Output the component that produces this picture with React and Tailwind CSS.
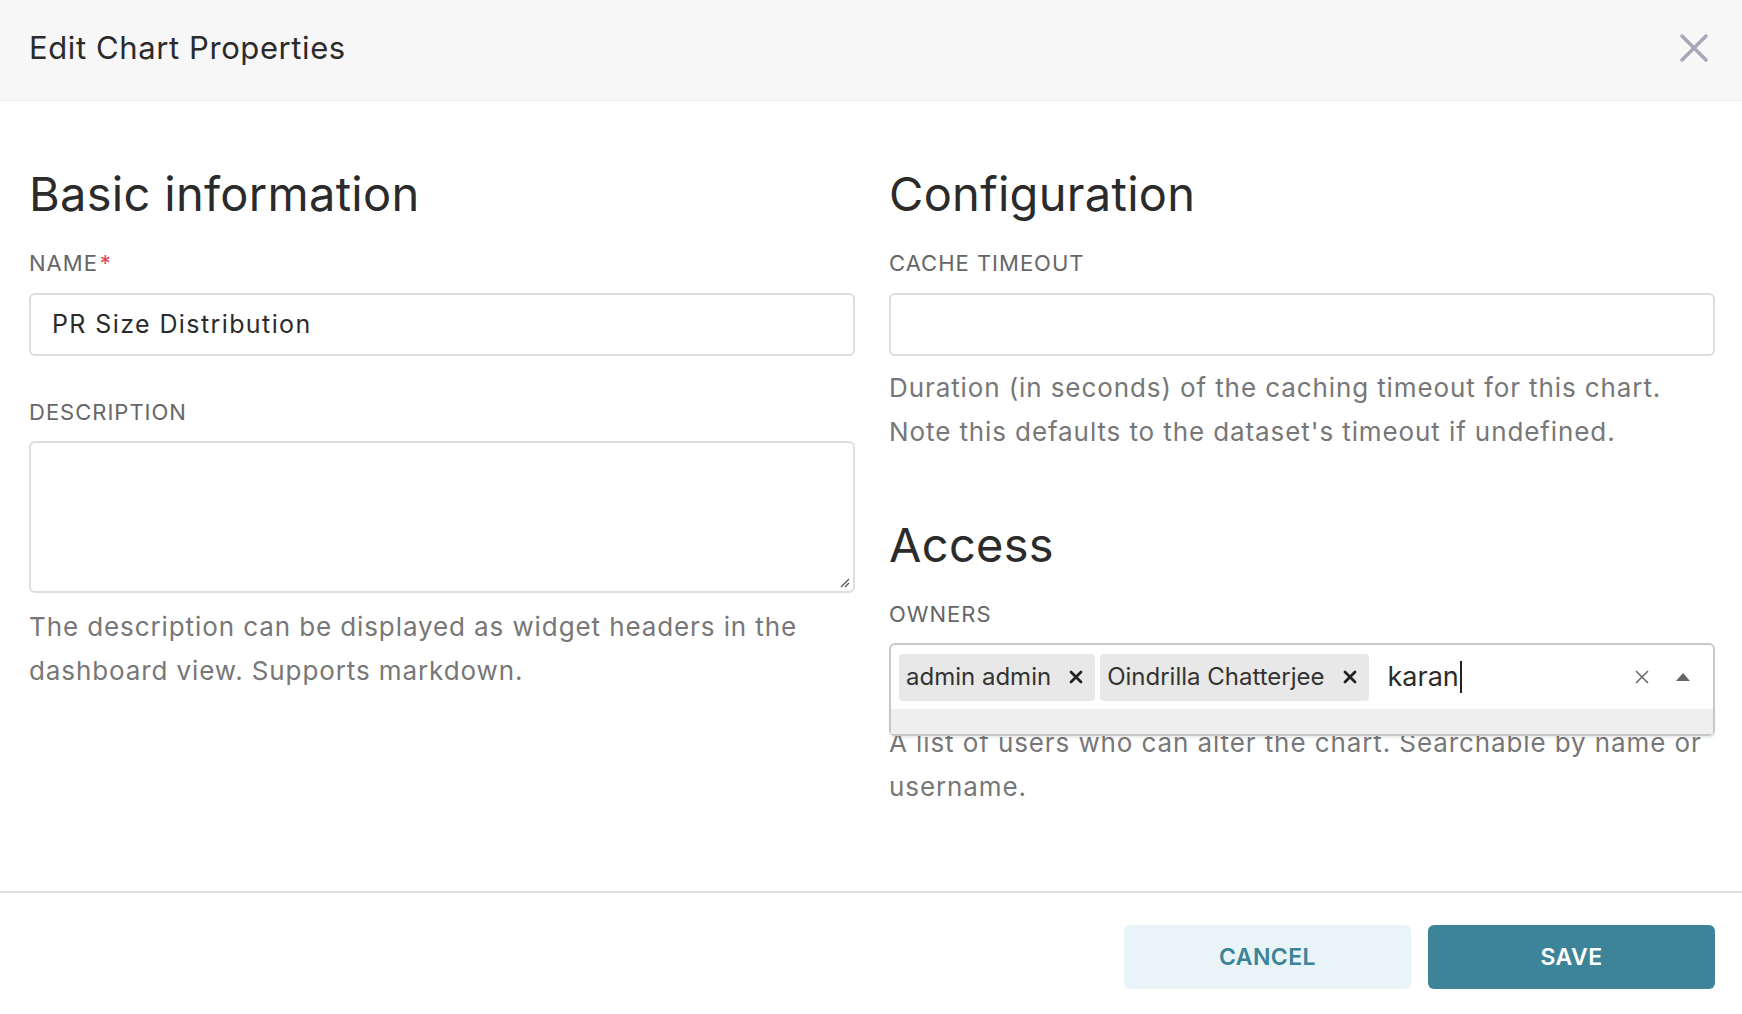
import React from 'react';

const Label = ({ children, required }) => (
  <div className="text-[22px] leading-[30px] text-[#666666] uppercase tracking-[1px]">
    {children}
    {required && <span className="text-[#e04355] ml-[2px]">*</span>}
  </div>
);

const Help = ({ children }) => (
  <p className="text-[26px] leading-[44px] text-[#777777] tracking-[0.9px]">{children}</p>
);

const Tag = ({ children }) => (
  <div className="flex items-center h-[47px] bg-[#e8e8e8] rounded-[4px] pl-[7px] pr-[12px] gap-[18px]">
    <span className="text-[24px] text-[#333333]">{children}</span>
    <svg width="14" height="14" viewBox="0 0 14 14">
      <path d="M2 2 L12 12 M12 2 L2 12" stroke="#222" strokeWidth="2.8" strokeLinecap="round" />
    </svg>
  </div>
);

export default function App() {
  return (
    <div className="w-[1742px] h-[1014px] bg-white flex flex-col font-['Inter',sans-serif] text-[#333333]">
      {/* header */}
      <div className="h-[101px] shrink-0 bg-[#f7f7f7] border-b border-[#ececec] flex items-center justify-between pl-[29px] pr-[33px] pb-[4px]">
        <h1 className="text-[31px] text-[#2b2b2b] tracking-[0.6px]">Edit Chart Properties</h1>
        <svg width="30" height="30" viewBox="0 0 30 30">
          <path d="M3 3 L27 27 M27 3 L3 27" stroke="#a6a8b8" strokeWidth="3.5" strokeLinecap="round" />
        </svg>
      </div>

      {/* body */}
      <div className="flex-1 grid grid-cols-2 gap-[34px] pl-[29px] pr-[27px] pt-[63px]">
        <div className="flex flex-col">
          <h2 className="text-[47px] leading-[60px] text-[#2b2b2b] tracking-[0.3px]">Basic information</h2>
          <div className="mt-[24px]"><Label required>Name</Label></div>
          <div className="mt-[15px] h-[63px] border-2 border-[#dcdde3] rounded-[6px] flex items-center px-[21px] text-[25px] text-[#2b2b2b] tracking-[1.4px]">
            PR Size Distribution
          </div>
          <div className="mt-[41px]"><Label>Description</Label></div>
          <div className="relative mt-[14px] h-[152px] border-2 border-[#dcdde3] rounded-[6px]">
            <svg className="absolute right-[3px] bottom-[3px]" width="12" height="12" viewBox="0 0 12 12">
              <path d="M11 3 L3 11 M11 7 L7 11" stroke="#555" strokeWidth="1.2" />
            </svg>
          </div>
          <div className="mt-[12px]">
            <Help>The description can be displayed as widget headers in the dashboard view. Supports markdown.</Help>
          </div>
        </div>

        <div className="flex flex-col">
          <h2 className="text-[47px] leading-[60px] text-[#2b2b2b] tracking-[0.3px]">Configuration</h2>
          <div className="mt-[24px]"><Label>Cache timeout</Label></div>
          <div className="mt-[15px] h-[63px] border-2 border-[#dcdde3] rounded-[6px]" />
          <div className="mt-[10px]">
            <Help>Duration (in seconds) of the caching timeout for this chart. Note this defaults to the dataset's timeout if undefined.</Help>
          </div>
          <h2 className="mt-[61px] text-[47px] leading-[60px] text-[#2b2b2b] tracking-[0.3px]">Access</h2>
          <div className="mt-[24px]"><Label>Owners</Label></div>
          <div className="relative mt-[14px]">
            <div className="h-[66px] border-2 border-b-0 border-[#c8c8c8] rounded-t-[6px] flex items-center pl-[8px] pr-[22px] gap-[5px]">
              <Tag>admin admin</Tag>
              <Tag>Oindrilla Chatterjee</Tag>
              <div className="flex items-center ml-[14px] flex-1">
                <span className="text-[27px] text-[#2b2b2b]">karan</span>
                <span className="w-[2px] h-[32px] bg-[#222] ml-[1px]" />
              </div>
              <svg width="14" height="14" viewBox="0 0 14 14" className="mr-[21px]">
                <path d="M1 1 L13 13 M13 1 L1 13" stroke="#666" strokeWidth="1.5" />
              </svg>
              <svg width="16" height="10" viewBox="0 0 16 10">
                <path d="M8 1 L15 9 L1 9 Z" fill="#666" />
              </svg>
            </div>
            <div className="absolute left-0 right-0 top-[66px] h-[27px] border-2 border-t-0 border-[#c8c8c8] rounded-b-[6px] bg-white shadow-[0_2px_2px_rgba(0,0,0,0.08)] z-10">
              <div className="h-full bg-[#efefef]" />
            </div>
            <div className="mt-[12px]">
              <Help>A list of users who can alter the chart. Searchable by name or username.</Help>
            </div>
          </div>
        </div>
      </div>

      {/* footer */}
      <div className="shrink-0 h-[123px] border-t-2 border-[#e0e0e0] flex items-start justify-end gap-[17px] pt-[32px] pr-[27px]">
        <button className="w-[287px] h-[64px] rounded-[6px] bg-[#e8f4f7] text-[#3c8398] text-[23px] font-semibold tracking-[0.4px]">CANCEL</button>
        <button className="w-[287px] h-[64px] rounded-[6px] bg-[#3e8499] text-white text-[23px] font-semibold tracking-[0.4px]">SAVE</button>
      </div>
    </div>
  );
}
